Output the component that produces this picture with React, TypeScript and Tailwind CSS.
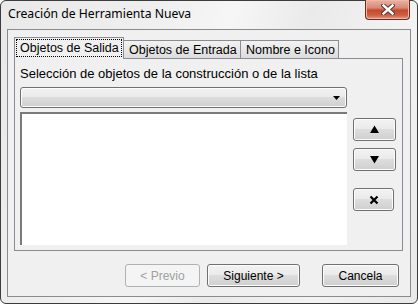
import React from "react";

const btn =
  "flex items-center justify-center rounded-[3px] border border-[#707070] bg-[linear-gradient(#f2f2f2_0%,#ebebeb_45%,#dddddd_50%,#cfcfcf_100%)] shadow-[inset_0_0_0_1px_#fcfcfc] text-[12px] text-black";

function Arrow({ up }: { up?: boolean }) {
  return (
    <svg width="11" height="9" viewBox="0 0 11 9">
      {up ? <polygon points="5.5,0.5 10,8 1,8" fill="#000" /> : <polygon points="1,1 10,1 5.5,8.5" fill="#000" />}
    </svg>
  );
}

export default function App() {
  return (
    <div
      className="w-[418px] h-[304px] rounded-[6px] border border-[#3c3c3c] bg-[linear-gradient(110deg,#e9e9e9_0%,#efefef_30%,#f6f6f6_45%,#eaeaea_60%,#f3f3f3_80%,#e8e8e8_100%)] flex flex-col px-[6px] pb-[6px]"
      style={{ fontFamily: '"Liberation Sans", Arial, sans-serif' }}
    >
      {/* title bar */}
      <div className="h-[28px] relative">
        <div
          className="pt-[5px] pl-[1px] text-[12.2px] leading-[16px] text-black"
          style={{ fontFamily: '"Noto Sans", "Open Sans", sans-serif' }}
        >
          Creación de Herramienta Nueva
        </div>
        <div className="absolute right-[1px] top-[-1px] w-[45px] h-[20px] rounded-b-[4px] border border-t-0 border-[#6b2a1f] bg-[linear-gradient(#eab3a4_0%,#d98a77_40%,#c4492e_55%,#cd5f45_80%,#e19a86_100%)] shadow-[inset_0_0_0_1px_#f0b7a8] flex items-center justify-center">
          <svg width="14" height="11" viewBox="0 0 14 11">
            <path d="M2.5 1.5 L11.5 9.5 M11.5 1.5 L2.5 9.5" stroke="#5a3a34" strokeWidth="4.4" strokeLinecap="square" />
            <path d="M2.5 1.5 L11.5 9.5 M11.5 1.5 L2.5 9.5" stroke="#ffffff" strokeWidth="2.4" strokeLinecap="square" />
          </svg>
        </div>
      </div>

      {/* client area */}
      <div className="flex-1 border border-[#8b8b8b] bg-[#f0f0f0] flex flex-col">
        {/* tabs */}
        <div className="mt-[7px] ml-[6px] h-[21px] flex items-end">
          <div className="relative z-10 -mb-px h-[22px] w-[110px] border border-b-0 border-[#898c95] bg-[#f0f0f0] px-[1px] pt-[1px]">
            <div className="h-[18px] border border-dotted border-black flex items-center pl-[3px] text-[12.5px] text-black">
              Objetos de Salida
            </div>
          </div>
          <div className="h-[18px] w-[117px] border border-l-0 border-b-0 border-[#898c95] bg-[linear-gradient(#f2f2f2,#dcdcdc)] flex items-center pl-[5px] pt-[2px] text-[12.5px] text-black">
            Objetos de Entrada
          </div>
          <div className="h-[18px] w-[98px] border border-l-0 border-b-0 border-[#898c95] bg-[linear-gradient(#f2f2f2,#dcdcdc)] flex items-center pl-[5px] pt-[2px] text-[12.5px] text-black">
            Nombre e Icono
          </div>
        </div>

        {/* tab panel */}
        <div className="ml-[6px] mr-[7px] h-[193px] border border-[#898c95] bg-[#f0f0f0] pl-[5px] pt-[7px]">
          <div className="h-[16px] leading-[16px] text-[13px] text-black">
            Selección de objetos de la construcción o de la lista
          </div>
          <div className={`mt-[5px] w-[327px] h-[21px] ${btn} justify-end pr-[6px]`}>
            <svg width="7" height="4" viewBox="0 0 7 4">
              <polygon points="0,0 7,0 3.5,4" fill="#000" />
            </svg>
          </div>
          <div className="mt-[4px] flex">
            <div className="w-[327px] h-[133px] bg-white border-t-2 border-l-2 border-[#7a7a7a]" />
            <div className="ml-[6px] pt-[6px] flex flex-col">
              <div className={`w-[43px] h-[23px] ${btn}`}>
                <Arrow up />
              </div>
              <div className={`mt-[7px] w-[43px] h-[23px] ${btn}`}>
                <Arrow />
              </div>
              <div className={`mt-[17px] w-[41px] h-[23px] ${btn}`}>
                <svg width="10" height="10" viewBox="0 0 10 10">
                  <path d="M1.5 1.5 L8.5 8.5 M8.5 1.5 L1.5 8.5" stroke="#000" strokeWidth="2.2" />
                </svg>
              </div>
            </div>
          </div>
        </div>

        {/* bottom buttons */}
        <div className="mt-[13px] flex justify-end pr-[11px]">
          <div className="w-[75px] h-[23px] flex items-center justify-center rounded-[3px] border border-[#adb2b5] bg-[#f4f4f4] text-[12px] text-[#a0a0a0]">
            &lt; Previo
          </div>
          <div className={`ml-[7px] w-[93px] h-[23px] ${btn}`}>Siguiente &gt;</div>
          <div className={`ml-[22px] w-[77px] h-[23px] ${btn}`}>Cancela</div>
        </div>
      </div>
    </div>
  );
}
